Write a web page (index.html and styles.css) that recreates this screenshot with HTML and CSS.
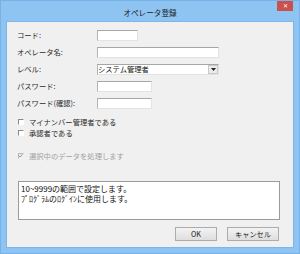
FILE: index.html
```html
<!DOCTYPE html>
<html lang="ja">
<head>
    <meta charset="UTF-8">
    <title>オペレータ登録</title>
    <link rel="stylesheet" href="styles.css">
</head>
<body>
    <div class="window">
        <div class="titlebar">
            <span></span>
            <span class="title">オペレータ登録</span>
            <span class="close">✕</span>
        </div>
        <div class="content">
            <div class="form">
                <label>コード:</label>
                <input type="text" class="field short">
                <label>オペレータ名:</label>
                <input type="text" class="field long">
                <label>レベル:</label>
                <div class="field long combo">
                    <span>システム管理者</span>
                    <span class="arrow"><svg width="5" height="3" viewBox="0 0 5 3"><path d="M0 0h5L2.5 3z" fill="#222"/></svg></span>
                </div>
                <label>パスワード:</label>
                <input type="password" class="field mid">
                <label>パスワード(確認):</label>
                <input type="password" class="field mid">
            </div>

            <div class="checks">
                <div class="check"><span class="box"></span>マイナンバー管理者である</div>
                <div class="check"><span class="box"></span>承認者である</div>
            </div>

            <div class="check disabled">
                <span class="box checked"><svg width="6" height="6" viewBox="0 0 6 6"><path d="M1 2.6L2.4 4.2L5.4 0.8" fill="none" stroke="#8f8f8f" stroke-width="1.1"/></svg></span>選択中のデータを処理します
            </div>

            <div class="memo">10~9999の範囲で設定します。<br>ﾌﾟﾛｸﾞﾗﾑのﾛｸﾞｲﾝに使用します。</div>

            <div class="buttons">
                <button class="ok">OK</button>
                <button class="cancel">キャンセル</button>
            </div>
        </div>
    </div>
</body>
</html>
```

FILE: styles.css
```css
body {
    margin: 0;
    background-color: #ffffff;
    font-family: "Noto Sans CJK JP", sans-serif;
    font-size: 7.3px;
    color: #2a2a2a;
}

.window {
    width: 300px;
    height: 254px;
    box-sizing: border-box;
    background-color: #8ec4f2; /* light blue frame */
    border: 1px solid #76b1ea;
    padding: 0 5px 5px 5px;
    display: flex;
    flex-direction: column;
}

.titlebar {
    height: 20px;
    display: grid;
    grid-template-columns: 1fr auto 1fr;
    align-items: start;
}

.titlebar .title {
    margin-top: 6px;
    font-size: 7.6px;
    line-height: 11px;
    color: #1a1a1a;
}

.titlebar .close {
    justify-self: end;
    width: 16px;
    height: 10px;
    margin-right: 1px;
    background-color: #c9504c;
    color: #fff;
    font-size: 6px;
    line-height: 10px;
    text-align: center;
}

.content {
    flex: 1;
    background-color: #f0f0f0;
    border: 1px solid #7fb5e8;
    padding: 8px 14px 0 10px;
}

.form {
    display: grid;
    grid-template-columns: 80px 1fr;
    grid-auto-rows: 11px;
    row-gap: 6px;
    align-items: center;
}

.form label {
    line-height: 11px;
    white-space: nowrap;
}

.field {
    box-sizing: border-box;
    height: 11px;
    margin: 0;
    padding: 0 1px;
    background-color: #fff;
    border: 1px solid #e3e3e3;
    border-top-color: #a6a6a6;
    border-left-color: #b4b4b4;
    outline: none;
    font-family: inherit;
    font-size: 7.3px;
}

.short {
    width: 41px;
}

.mid {
    width: 55px;
}

.long {
    width: 122px;
}

.combo {
    display: flex;
    align-items: center;
    justify-content: space-between;
    padding: 0;
    line-height: 9px;
    color: #111;
}

.combo .arrow {
    box-sizing: border-box;
    width: 10px;
    height: 9px;
    border: 1px solid #c8c8c8;
    background-color: #ececec;
    display: flex;
    align-items: center;
    justify-content: center;
}

.checks {
    margin-top: 7px;
}

.check {
    display: flex;
    align-items: center;
    gap: 5px;
    height: 11.5px;
    padding-left: 1px;
    white-space: nowrap;
}

.box {
    box-sizing: border-box;
    width: 6px;
    height: 6px;
    background-color: #fff;
    border: 1px solid #fff;
    border-top-color: #8a8a8a;
    border-left-color: #8a8a8a;
    display: flex;
}

.disabled {
    margin-top: 11px;
    color: #a0a0a0;
}

.box.checked {
    border: 1px solid #f0f0f0;
    border-top-color: #b8b8b8;
    border-left-color: #b8b8b8;
    background: none;
    overflow: visible;
}

.box.checked svg {
    margin: -1px 0 0 -1px;
}

.memo {
    box-sizing: border-box;
    margin-top: 19px;
    margin-left: 1px;
    width: 262px;
    height: 39px;
    background-color: #fff;
    border: 1px solid #9a9a9a;
    padding: 2px 2px;
    font-size: 8px;
    line-height: 10px;
    color: #111;
}

.buttons {
    display: flex;
    justify-content: flex-end;
    gap: 10px;
    margin-top: 7px;
}

.buttons button {
    box-sizing: border-box;
    height: 14px;
    padding: 0;
    border: 1px solid #acacac;
    background: linear-gradient(#f3f3f3, #dedede);
    font-family: inherit;
    font-size: 7.2px;
    color: #222;
}

.ok {
    width: 42px;
}

.cancel {
    width: 52px;
}
```
